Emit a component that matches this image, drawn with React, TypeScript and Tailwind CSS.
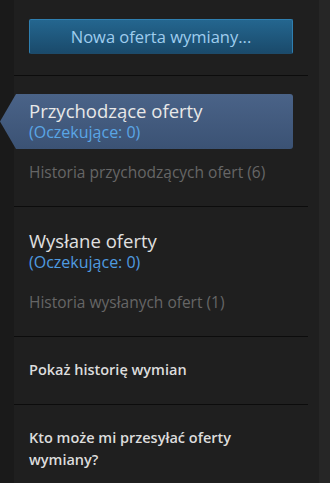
const font = { fontFamily: '"Open Sans", "Noto Sans", sans-serif' };

function Divider() {
  return <div className="ml-[14px] w-[294px] h-px bg-[#0c0c0c]" />;
}

export default function App() {
  return (
    <div
      className="w-[330px] h-[483px] overflow-hidden flex bg-[#262626] font-['Open_Sans',sans-serif]"
      style={font}
    >
      <div className="w-[319px] h-full bg-[linear-gradient(to_right,#1a1a1a_14px,#1f1f1f_14px)]">
        {/* New offer button */}
        <div className="pt-[19px] pl-[29px]">
          <button className="w-[264px] h-[35px] rounded-[2px] border border-[#2f7fb0] border-b-[#1d4a69] bg-[linear-gradient(to_bottom,#24668f,#1a4a6b)] text-[#9fcdee] text-[16.5px] leading-[33px]">
            Nowa oferta wymiany...
          </button>
        </div>
        <div className="mt-[21px]">
          <Divider />
        </div>

        {/* Incoming offers */}
        <div className="mt-[18px] w-[293px] h-[55px] rounded-r-[3px] bg-[linear-gradient(to_bottom,#4a6388,#3b5274)] [clip-path:polygon(16px_0,100%_0,100%_100%,16px_100%,0_50%)] pl-[29px] pt-[6px]">
          <div className="text-[18.5px] leading-[22px] text-[#e8e8e8]">Przychodzące oferty</div>
          <div className="text-[16px] leading-[20px] text-[#5aa6e6]">(Oczekujące: 0)</div>
        </div>
        <div className="mt-[13px] pl-[29px] text-[15.5px] leading-[20px] text-[#666666]">
          Historia przychodzących ofert (6)
        </div>
        <div className="mt-[24px]">
          <Divider />
        </div>

        {/* Sent offers */}
        <div className="mt-[23px] pl-[29px]">
          <div className="text-[18.5px] leading-[22px] text-[#e0e0e0]">Wysłane oferty</div>
          <div className="text-[16px] leading-[20px] text-[#4f9be0]">(Oczekujące: 0)</div>
        </div>
        <div className="mt-[20px] pl-[29px] text-[15.5px] leading-[20px] text-[#666666]">
          Historia wysłanych ofert (1)
        </div>
        <div className="mt-[24px]">
          <Divider />
        </div>

        <div className="mt-[23px] pl-[29px] text-[14.5px] leading-[20px] font-semibold text-[#dcdcdc]">
          Pokaż historię wymian
        </div>
        <div className="mt-[24px]">
          <Divider />
        </div>

        <div className="mt-[22px] pl-[29px] pr-[30px] text-[14.5px] leading-[22px] font-semibold text-[#dcdcdc]">
          Kto może mi przesyłać oferty wymiany?
        </div>
      </div>
    </div>
  );
}
